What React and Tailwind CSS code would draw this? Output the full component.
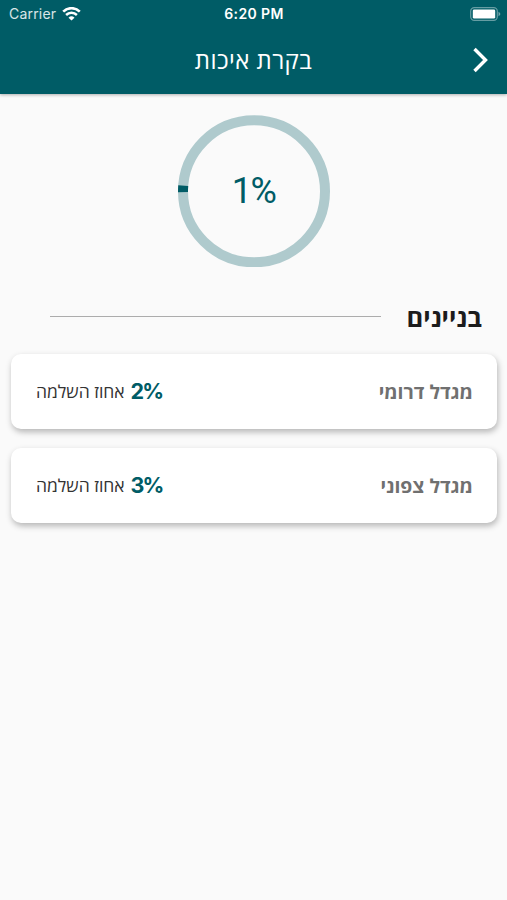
const BUILDINGS = [
  { id: 1, name: 'מגדל דרומי', percent: 2 },
  { id: 2, name: 'מגדל צפוני', percent: 3 },
];

const RADIUS = 71;
const CIRCUMFERENCE = 2 * Math.PI * RADIUS;

function StatusBar() {
  return (
    <div
      dir="ltr"
      className="grid h-[27px] grid-cols-3 items-center pr-[6px] pl-[9px] font-['Inter',sans-serif] text-white"
    >
      <div className="flex items-center gap-[6px]">
        <span className="text-[14px] tracking-[0.2px] text-white/85">Carrier</span>
        <svg width="19" height="14" viewBox="0 0 19 14" fill="none" stroke="currentColor">
          <path d="M1.2 4.6a11.8 11.8 0 0 1 16.6 0" strokeWidth="2.6" />
          <path d="M4.1 8a7.7 7.7 0 0 1 10.8 0" strokeWidth="2.5" />
          <path d="M9.5 13.6 6.5 10.7a4.3 4.3 0 0 1 6 0z" fill="currentColor" stroke="none" />
        </svg>
      </div>
      <span className="-ms-[2px] text-center text-[14px] font-semibold tracking-[0.4px]">6:20 PM</span>
      <svg className="justify-self-end" width="31" height="14" viewBox="0 0 31 14">
        <rect x="0.7" y="0.6" width="26.6" height="12.8" rx="3.6" fill="none" stroke="#fff" strokeOpacity="0.4" strokeWidth="1.2" />
        <rect x="2.8" y="2.4" width="22.4" height="9.2" rx="1.4" fill="#fff" />
        <path d="M28.5 4.8v4.4c1-.4 1.8-1.3 1.8-2.2s-.8-1.8-1.8-2.2z" fill="#fff" fillOpacity="0.45" />
      </svg>
    </div>
  );
}

function Header({ title }) {
  return (
    <header className="h-[94px] bg-[#005c66] shadow-[0_1px_3px_rgba(0,0,0,0.3)]">
      <StatusBar />
      <div className="grid h-[66px] grid-cols-[1fr_auto_1fr] items-center text-white">
        <button type="button" aria-label="חזרה" className="ps-[18px]">
          <svg width="18" height="26" viewBox="0 0 18 26" fill="none" stroke="currentColor" strokeWidth="3.4">
            <path d="m3.5 2 11 11-11 11" />
          </svg>
        </button>
        <h1 className="text-[24px] tracking-[0.45px] whitespace-nowrap">{title}</h1>
      </div>
    </header>
  );
}

function ProgressRing({ percent }) {
  return (
    <div className="mx-auto grid size-[152px] place-items-center">
      <svg className="col-start-1 row-start-1" width="152" height="152" viewBox="0 0 152 152" fill="none" strokeWidth="10">
        <circle cx="76" cy="76.3" r={RADIUS} stroke="#afcacd" />
        <circle
          cx="76"
          cy="76.3"
          r={RADIUS}
          stroke="#005c66"
          strokeDasharray={`${(CIRCUMFERENCE * 1.5 * percent) / 100} ${CIRCUMFERENCE}`}
          transform="rotate(179.3 76 76.3)"
        />
      </svg>
      <span dir="ltr" className="col-start-1 row-start-1 font-['Roboto',sans-serif] text-[36px] tracking-[-1.5px] text-[#005c66]">
        {percent}%
      </span>
    </div>
  );
}

function BuildingCard({ name, percent }) {
  return (
    <li className="flex h-[75px] items-center justify-between rounded-[10px] bg-white ps-[24px] pe-[25px] shadow-[1px_3px_6px_rgba(0,0,0,0.28)]">
      <span className="text-[19.4px] font-bold text-[#707070]">{name}</span>
      <div className="flex items-center gap-[6px]">
        <span dir="ltr" className="font-['Inter',sans-serif] text-[21.5px] font-bold tracking-[-2px] text-[#005c66]">
          {percent}%
        </span>
        <span className="-mt-px text-[17.5px] text-[#333]">אחוז השלמה</span>
      </div>
    </li>
  );
}

export default function App() {
  return (
    <div dir="rtl" className="h-[900px] w-[507px] overflow-hidden bg-[#fafafa] font-['Open_Sans',sans-serif]">
      <Header title="בקרת איכות" />
      <main className="pt-[21px]">
        <ProgressRing percent={1} />
        <div className="mt-[30px] flex h-10 items-center ps-[25px] pe-[50px]">
          <h2 className="w-[101px] text-[25.5px] font-bold whitespace-nowrap text-[#1c1c1c]">בניינים</h2>
          <div className="-mt-px h-px flex-1 bg-[#acacac]" />
        </div>
        <ul className="mt-[17px] flex flex-col gap-[19px] ps-[10px] pe-[11px]">
          {BUILDINGS.map((building) => (
            <BuildingCard key={building.id} name={building.name} percent={building.percent} />
          ))}
        </ul>
      </main>
    </div>
  );
}
